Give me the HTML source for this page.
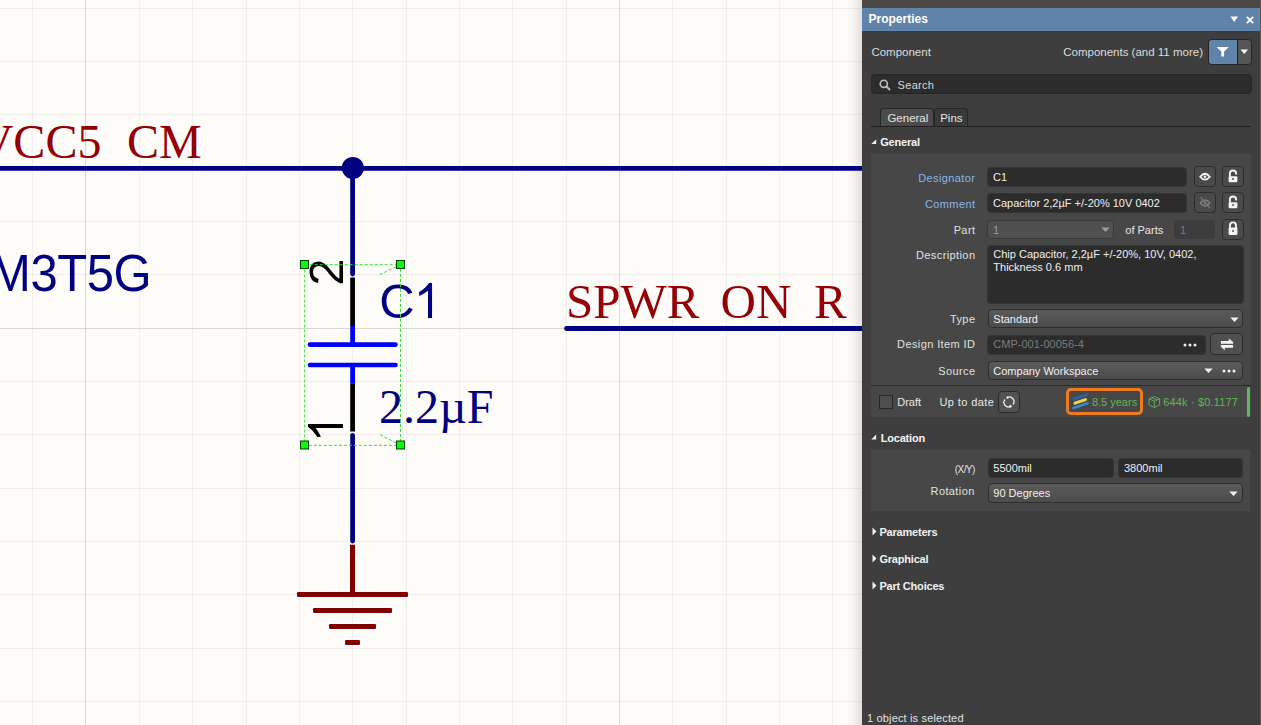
<!DOCTYPE html>
<html><head><meta charset="utf-8">
<style>
*{margin:0;padding:0;box-sizing:border-box}
html,body{width:1261px;height:725px;overflow:hidden;background:#fefcf9}
body{position:relative;font-family:"Liberation Sans",sans-serif}
#sch{position:absolute;left:0;top:0;width:862px;height:725px}
#shadow{position:absolute;left:846px;top:0;width:16px;height:725px;background:linear-gradient(to right,rgba(40,30,20,0),rgba(40,30,20,0.03) 40%,rgba(40,30,20,0.13))}
#panel{position:absolute;left:862px;top:0;width:399px;height:725px;background:#3e3e3e;color:#e6e6e6;font-size:11px;overflow:hidden}
.a{position:absolute;white-space:nowrap}
</style></head><body>
<svg id="sch" width="862" height="725" viewBox="0 0 862 725" shape-rendering="geometricPrecision">
<rect width="862" height="725" fill="#fefcf9"/>
<g shape-rendering="crispEdges"><rect x="32" y="0" width="1" height="725" fill="rgba(40,30,20,0.06)"/>
<rect x="85" y="0" width="1" height="725" fill="rgba(40,30,20,0.16)"/>
<rect x="139" y="0" width="1" height="725" fill="rgba(40,30,20,0.06)"/>
<rect x="192" y="0" width="1" height="725" fill="rgba(40,30,20,0.06)"/>
<rect x="246" y="0" width="1" height="725" fill="rgba(40,30,20,0.06)"/>
<rect x="299" y="0" width="1" height="725" fill="rgba(40,30,20,0.06)"/>
<rect x="352" y="0" width="1" height="725" fill="rgba(40,30,20,0.06)"/>
<rect x="406" y="0" width="1" height="725" fill="rgba(40,30,20,0.06)"/>
<rect x="459" y="0" width="1" height="725" fill="rgba(40,30,20,0.06)"/>
<rect x="512" y="0" width="1" height="725" fill="rgba(40,30,20,0.06)"/>
<rect x="566" y="0" width="1" height="725" fill="rgba(40,30,20,0.06)"/>
<rect x="619" y="0" width="1" height="725" fill="rgba(40,30,20,0.16)"/>
<rect x="672" y="0" width="1" height="725" fill="rgba(40,30,20,0.06)"/>
<rect x="726" y="0" width="1" height="725" fill="rgba(40,30,20,0.06)"/>
<rect x="779" y="0" width="1" height="725" fill="rgba(40,30,20,0.06)"/>
<rect x="832" y="0" width="1" height="725" fill="rgba(40,30,20,0.06)"/>
<rect x="0" y="8" width="862" height="1" fill="rgba(40,30,20,0.06)"/>
<rect x="0" y="61" width="862" height="1" fill="rgba(40,30,20,0.06)"/>
<rect x="0" y="114" width="862" height="1" fill="rgba(40,30,20,0.06)"/>
<rect x="0" y="168" width="862" height="1" fill="rgba(40,30,20,0.06)"/>
<rect x="0" y="221" width="862" height="1" fill="rgba(40,30,20,0.06)"/>
<rect x="0" y="274" width="862" height="1" fill="rgba(40,30,20,0.06)"/>
<rect x="0" y="328" width="862" height="1" fill="rgba(40,30,20,0.16)"/>
<rect x="0" y="381" width="862" height="1" fill="rgba(40,30,20,0.06)"/>
<rect x="0" y="434" width="862" height="1" fill="rgba(40,30,20,0.06)"/>
<rect x="0" y="488" width="862" height="1" fill="rgba(40,30,20,0.06)"/>
<rect x="0" y="541" width="862" height="1" fill="rgba(40,30,20,0.06)"/>
<rect x="0" y="594" width="862" height="1" fill="rgba(40,30,20,0.06)"/>
<rect x="0" y="648" width="862" height="1" fill="rgba(40,30,20,0.06)"/>
<rect x="0" y="701" width="862" height="1" fill="rgba(40,30,20,0.06)"/></g>
<text x="-21.3" y="157.5" font-family="Liberation Serif" font-size="48" fill="#940006">VCC5</text>
<text x="127" y="157.5" font-family="Liberation Serif" font-size="48" fill="#940006">CM</text>
<line x1="0" y1="168.4" x2="862" y2="168.4" stroke="#000080" stroke-width="4.8"/>
<circle cx="352.85" cy="167.9" r="11" fill="#000080"/>
<text x="-10" y="291" transform="matrix(1,0,0,1.05,0,-14.55)" font-family="Liberation Sans" font-size="49" letter-spacing="-0.4" fill="#000080">M3T5G</text>
<line x1="352.6" y1="168" x2="352.6" y2="274.1" stroke="#000080" stroke-width="4.8" stroke-linecap="round"/>
<line x1="352.6" y1="277.5" x2="352.6" y2="326" stroke="#000000" stroke-width="4.8"/>
<line x1="352.6" y1="326" x2="352.6" y2="344.6" stroke="#0000ff" stroke-width="4.8"/>
<line x1="310" y1="344.6" x2="395.5" y2="344.6" stroke="#0000ff" stroke-width="4.7" stroke-linecap="round"/>
<line x1="310" y1="365" x2="395.5" y2="365" stroke="#0000ff" stroke-width="4.7" stroke-linecap="round"/>
<line x1="352.6" y1="365" x2="352.6" y2="383.8" stroke="#0000ff" stroke-width="4.8"/>
<line x1="352.6" y1="383.8" x2="352.6" y2="431.5" stroke="#000000" stroke-width="4.8"/>
<line x1="352.6" y1="435.3" x2="352.6" y2="541" stroke="#000080" stroke-width="4.8" stroke-linecap="round"/>
<line x1="352.5" y1="544.7" x2="352.5" y2="594" stroke="#800000" stroke-width="5"/>
<rect x="297" y="592" width="111" height="5" rx="1.2" fill="#800000"/>
<rect x="313" y="608" width="79" height="5" rx="1.2" fill="#800000"/>
<rect x="329" y="624" width="47" height="5" rx="1.2" fill="#800000"/>
<rect x="345" y="640" width="15" height="5" rx="1.2" fill="#800000"/>
<text x="379.3" y="318" font-family="Liberation Sans" font-size="49" fill="#000080">C</text>
<path d="M432.05,283 L432.05,317.9 L428,317.9 L428,290.7 Q424,293.8 419.3,295.9 L419,292.3 Q425,289 429.2,283 Z" fill="#000080"/>
<text x="379" y="423.2" font-family="Liberation Serif" font-size="48" fill="#000080">2.2µF</text>
<text x="566" y="317.8" font-family="Liberation Serif" font-size="49" fill="#940006">SPWR</text>
<text x="720.5" y="317.8" font-family="Liberation Serif" font-size="49" fill="#940006">ON</text>
<text x="814" y="317.8" font-family="Liberation Serif" font-size="49" fill="#940006">R</text>
<line x1="566.5" y1="328.5" x2="862" y2="328.5" stroke="#000080" stroke-width="4.8" stroke-linecap="round"/>
<text transform="translate(343,285.8) rotate(-90)" font-family="Liberation Sans" font-size="49" fill="#000">2</text>
<path transform="translate(25,856.05) rotate(-90)" d="M432.05,283 L432.05,317.9 L428,317.9 L428,290.7 Q424,293.8 419.3,295.9 L419,292.3 Q425,289 429.2,283 Z" fill="#000"/>
<rect x="304.7" y="264.7" width="95.8" height="180.6" fill="none" stroke="#33dd33" stroke-width="1" stroke-dasharray="3,2"/>
<line x1="400.5" y1="264.7" x2="378.8" y2="275" stroke="#33dd33" stroke-width="1" stroke-dasharray="3,2"/>
<line x1="400.5" y1="445.3" x2="378.8" y2="434" stroke="#33dd33" stroke-width="1" stroke-dasharray="3,2"/>
<rect x="300.5" y="260.5" width="8" height="8" fill="#00ff00" stroke="#0a3a0a" stroke-width="1"/>
<rect x="396.5" y="260.5" width="8" height="8" fill="#00ff00" stroke="#0a3a0a" stroke-width="1"/>
<rect x="300.5" y="441" width="8" height="8" fill="#00ff00" stroke="#0a3a0a" stroke-width="1"/>
<rect x="396.5" y="441" width="8" height="8" fill="#00ff00" stroke="#0a3a0a" stroke-width="1"/>
</svg>
<div id="shadow"></div>
<div id="panel">
<div class="a" style="left:0.0px;top:0.0px;width:399.0px;height:8.0px;background:#4a4744"></div>
<div class="a" style="left:0.0px;top:8.0px;width:399.0px;height:23.0px;background:#6084a9"></div>
<div class="a" style="left:6.5px;top:10.93px;font-size:12px;line-height:16px;color:#ffffff;font-weight:bold;">Properties</div>
<svg class="a" style="left:368px;top:16px" width="9" height="7"><path d="M0.5,0.5 L8,0.5 L4.25,6 Z" fill="#fff"/></svg>
<svg class="a" style="left:384px;top:16px" width="8" height="8"><path d="M0.8,0.8 L7.2,7.2 M7.2,0.8 L0.8,7.2" stroke="#fff" stroke-width="1.9"/></svg>
<div class="a" style="left:398.0px;top:0.0px;width:1.0px;height:725.0px;background:#5a5959"></div>
<div class="a" style="left:9.4px;top:44.75px;font-size:11.5px;line-height:15.5px;color:#dcdcdc;font-weight:normal;">Component</div>
<div class="a" style="right:58.0px;top:44.55px;font-size:11.5px;line-height:15.5px;color:#dcdcdc;font-weight:normal;">Components (and 11 more)</div>
<div class="a" style="left:346.0px;top:39.0px;width:44.0px;height:25.5px;background:#555;border-radius:4px;border:1px solid #252525"></div>
<div class="a" style="left:346.0px;top:39.0px;width:30.0px;height:25.5px;background:#5f83a9;border-radius:4px 0 0 4px;border:1px solid #252525;border-right:1px solid #1a2230"></div>
<svg class="a" style="left:378px;top:49px" width="9" height="6"><path d="M0.5,0.5 L8,0.5 L4.25,5 Z" fill="#fff"/></svg>
<div class="a" style="left:9.0px;top:74.0px;width:380.6px;height:19.6px;background:#2c2c2c;border-radius:4px;border:1px solid #262626"></div>
<svg class="a" style="left:17px;top:79px" width="12" height="12"><circle cx="4.8" cy="4.8" r="3.6" stroke="#bdbdbd" stroke-width="1.6" fill="none"/><path d="M7.5,7.5 L11,11" stroke="#bdbdbd" stroke-width="2"/></svg>
<div class="a" style="left:35.6px;top:77.66px;font-size:11px;line-height:15px;color:#d8d8d8;font-weight:normal;letter-spacing:0.3px">Search</div>
<div class="a" style="left:9.0px;top:126.0px;width:380.0px;height:1.0px;background:#1f1f1f"></div>
<div class="a" style="left:18.0px;top:108.0px;width:53.5px;height:18.0px;background:#4b4b4b;border:1.5px solid #252525;border-bottom:none;border-radius:4px 4px 0 0"></div>
<div class="a" style="left:71.5px;top:108.0px;width:34.3px;height:18.0px;background:#393939;border:1.5px solid #252525;border-bottom:none;border-radius:4px 4px 0 0"></div>
<div class="a" style="left:25.4px;top:110.75px;font-size:11.5px;line-height:15.5px;color:#e4e4e4;font-weight:normal;">General</div>
<div class="a" style="left:78.2px;top:110.75px;font-size:11.5px;line-height:15.5px;color:#e4e4e4;font-weight:normal;">Pins</div>
<div class="a" style="left:18.2px;top:135.16px;font-size:11px;line-height:15px;color:#f4f4f4;font-weight:bold;letter-spacing:-0.2px">General</div>
<div class="a" style="left:9.0px;top:154.0px;width:379.5px;height:231.0px;background:#474747"></div>
<div class="a" style="right:285.6px;top:170.76px;font-size:11px;line-height:15px;color:#8cb4e6;font-weight:normal;letter-spacing:0.4px">Designator</div>
<div class="a" style="left:125.3px;top:167.2px;width:200.2px;height:19.5px;background:#2c2c2c;border-radius:4px;border:1px solid #333;"></div>
<div class="a" style="left:131.0px;top:170.36px;font-size:11px;line-height:15px;color:#f0f0f0;font-weight:normal;">C1</div>
<div class="a" style="left:332.3px;top:166.4px;width:21.5px;height:21.1px;background:#4a4a4a;border-radius:4px;border:1.5px solid #2c2c2c"></div>
<div class="a" style="left:360.3px;top:166.4px;width:21.5px;height:21.0px;background:#4a4a4a;border-radius:4px;border:1.5px solid #2c2c2c"></div>
<div class="a" style="right:285.6px;top:196.76px;font-size:11px;line-height:15px;color:#8cb4e6;font-weight:normal;letter-spacing:0.4px">Comment</div>
<div class="a" style="left:125.3px;top:193.0px;width:200.2px;height:20.0px;background:#2c2c2c;border-radius:4px;border:1px solid #333;"></div>
<div class="a" style="left:131.0px;top:196.46px;font-size:11px;line-height:15px;color:#f0f0f0;font-weight:normal;">Capacitor 2,2µF +/-20% 10V 0402</div>
<div class="a" style="left:332.3px;top:192.4px;width:21.5px;height:21.0px;background:#4a4a4a;border-radius:4px;border:1.5px solid #2c2c2c"></div>
<div class="a" style="left:360.3px;top:192.4px;width:21.5px;height:21.0px;background:#4a4a4a;border-radius:4px;border:1.5px solid #2c2c2c"></div>
<div class="a" style="right:285.6px;top:222.86px;font-size:11px;line-height:15px;color:#e0e0e0;font-weight:normal;letter-spacing:0.4px">Part</div>
<div class="a" style="left:125.3px;top:219.8px;width:126.9px;height:19.2px;background:#4f4f4f;border-radius:4px;border:1px solid #3a3a3a"></div>
<div class="a" style="left:131.0px;top:222.86px;font-size:11px;line-height:15px;color:#9a9a9a;font-weight:normal;">1</div>
<svg class="a" style="left:238.8px;top:226.5px" width="9" height="6"><path d="M0.3,0.5 L8.7,0.5 L4.5,5 Z" fill="#9a9a9a"/></svg>
<div class="a" style="left:263.3px;top:222.86px;font-size:11px;line-height:15px;color:#e8e8e8;font-weight:normal;">of Parts</div>
<div class="a" style="left:312.4px;top:219.8px;width:41.0px;height:19.2px;background:#3c3c3c;border-radius:4px"></div>
<div class="a" style="left:318.0px;top:222.86px;font-size:11px;line-height:15px;color:#7a7a7a;font-weight:normal;">1</div>
<div class="a" style="left:360.3px;top:218.6px;width:21.5px;height:21.0px;background:#4a4a4a;border-radius:4px;border:1.5px solid #2c2c2c"></div>
<div class="a" style="right:285.6px;top:247.56px;font-size:11px;line-height:15px;color:#e0e0e0;font-weight:normal;letter-spacing:0.4px">Description</div>
<div class="a" style="left:125.4px;top:244.5px;width:256.2px;height:59.0px;background:#2c2c2c;border-radius:4px;border:1px solid #333;"></div>
<div class="a" style="left:131.3px;top:246.76px;font-size:11px;line-height:15px;color:#f0f0f0;font-weight:normal;">Chip Capacitor, 2,2µF +/-20%, 10V, 0402,</div>
<div class="a" style="left:131.3px;top:259.66px;font-size:11px;line-height:15px;color:#f0f0f0;font-weight:normal;">Thickness 0.6 mm</div>
<div class="a" style="right:285.6px;top:311.86px;font-size:11px;line-height:15px;color:#e0e0e0;font-weight:normal;letter-spacing:0.4px">Type</div>
<div class="a" style="left:125.8px;top:309.0px;width:255.6px;height:19.0px;background:linear-gradient(#5a5a5a,#4c4c4c);border-radius:4px;border:1px solid #2e2e2e"></div>
<div class="a" style="left:131.3px;top:311.86px;font-size:11px;line-height:15px;color:#f0f0f0;font-weight:normal;">Standard</div>
<svg class="a" style="left:367.6px;top:316.5px" width="9" height="6"><path d="M0.3,0.5 L8.7,0.5 L4.5,5 Z" fill="#f0f0f0"/></svg>
<div class="a" style="right:285.6px;top:336.66px;font-size:11px;line-height:15px;color:#e0e0e0;font-weight:normal;letter-spacing:0.4px">Design Item ID</div>
<div class="a" style="left:125.4px;top:335.4px;width:218.3px;height:19.3px;background:#2c2c2c;border-radius:4px;border:1px solid #333;"></div>
<div class="a" style="left:131.3px;top:337.36px;font-size:11px;line-height:15px;color:#7c7c7c;font-weight:normal;">CMP-001-00056-4</div>
<svg class="a" style="left:321.0px;top:343.0px" width="14" height="4"><circle cx="2" cy="2" r="1.5" fill="#f0f0f0"/><circle cx="7" cy="2" r="1.5" fill="#f0f0f0"/><circle cx="12" cy="2" r="1.5" fill="#f0f0f0"/></svg>
<div class="a" style="left:348.3px;top:333.4px;width:33.0px;height:22.1px;background:#505050;border-radius:4px;border:1.5px solid #2a2a2a"></div>
<div class="a" style="right:285.6px;top:363.66px;font-size:11px;line-height:15px;color:#e0e0e0;font-weight:normal;letter-spacing:0.4px">Source</div>
<div class="a" style="left:125.8px;top:361.0px;width:255.6px;height:19.4px;background:linear-gradient(#5a5a5a,#4c4c4c);border-radius:4px;border:1px solid #2e2e2e"></div>
<div class="a" style="left:131.3px;top:363.66px;font-size:11px;line-height:15px;color:#f0f0f0;font-weight:normal;">Company Workspace</div>
<svg class="a" style="left:341.5px;top:368.0px" width="9" height="6"><path d="M0.3,0.5 L8.7,0.5 L4.5,5 Z" fill="#f0f0f0"/></svg>
<svg class="a" style="left:359.5px;top:369.0px" width="14" height="4"><circle cx="2" cy="2" r="1.5" fill="#f0f0f0"/><circle cx="7" cy="2" r="1.5" fill="#f0f0f0"/><circle cx="12" cy="2" r="1.5" fill="#f0f0f0"/></svg>
<div class="a" style="left:9.0px;top:385.0px;width:379.5px;height:1.0px;background:#2a2a2a"></div>
<div class="a" style="left:9.0px;top:386.0px;width:379.5px;height:31.0px;background:#474747"></div>
<div class="a" style="left:17.0px;top:395.0px;width:13.6px;height:13.5px;background:#4e4e4e;border:1.3px solid #262626"></div>
<div class="a" style="left:35.2px;top:394.56px;font-size:11px;line-height:15px;color:#e8e8e8;font-weight:normal;">Draft</div>
<div class="a" style="left:77.4px;top:394.56px;font-size:11px;line-height:15px;color:#e8e8e8;font-weight:normal;letter-spacing:0.4px">Up to date</div>
<div class="a" style="left:136.2px;top:391.0px;width:21.6px;height:21.6px;background:#525252;border-radius:4px;border:1.5px solid #2a2a2a"></div>
<div class="a" style="left:204.0px;top:388.3px;width:77.0px;height:26.4px;border:3px solid #f07a22;border-radius:5px"></div>
<div class="a" style="left:229.9px;top:394.86px;font-size:11px;line-height:15px;color:#64b658;font-weight:normal;">8.5 years</div>
<div class="a" style="left:301.3px;top:394.86px;font-size:11px;line-height:15px;color:#64b658;font-weight:normal;letter-spacing:0.15px">644k · $0.1177</div>
<div class="a" style="left:385.0px;top:387.2px;width:3.0px;height:29.5px;background:#5cb85a;border-radius:1.5px"></div>
<div class="a" style="left:18.7px;top:431.06px;font-size:11px;line-height:15px;color:#f4f4f4;font-weight:bold;letter-spacing:-0.2px">Location</div>
<div class="a" style="left:9.0px;top:449.7px;width:378.7px;height:61.1px;background:#474747"></div>
<div class="a" style="right:286.4px;top:462.50px;font-size:10px;line-height:14px;color:#e0e0e0;font-weight:normal;letter-spacing:-0.6px">(X/Y)</div>
<div class="a" style="left:125.6px;top:458.3px;width:126.0px;height:19.3px;background:#2c2c2c;border-radius:4px;border:1px solid #333;"></div>
<div class="a" style="left:131.3px;top:461.36px;font-size:11px;line-height:15px;color:#f0f0f0;font-weight:normal;">5500mil</div>
<div class="a" style="left:256.3px;top:458.3px;width:125.0px;height:19.3px;background:#2c2c2c;border-radius:4px;border:1px solid #333;"></div>
<div class="a" style="left:262.0px;top:461.36px;font-size:11px;line-height:15px;color:#f0f0f0;font-weight:normal;">3800mil</div>
<div class="a" style="right:286.3px;top:484.36px;font-size:11px;line-height:15px;color:#e0e0e0;font-weight:normal;letter-spacing:0.4px">Rotation</div>
<div class="a" style="left:125.6px;top:483.0px;width:255.7px;height:19.6px;background:linear-gradient(#5a5a5a,#4c4c4c);border-radius:4px;border:1px solid #2e2e2e"></div>
<div class="a" style="left:131.3px;top:486.36px;font-size:11px;line-height:15px;color:#f0f0f0;font-weight:normal;">90 Degrees</div>
<svg class="a" style="left:367.3px;top:490.5px" width="9" height="6"><path d="M0.3,0.5 L8.7,0.5 L4.5,5 Z" fill="#f0f0f0"/></svg>
<svg class="a" style="left:9.5px;top:526.7px" width="5" height="9"><path d="M0.5,0.5 L4.5,4.5 L0.5,8.5 Z" fill="#f0f0f0"/></svg>
<div class="a" style="left:17.4px;top:525.06px;font-size:11px;line-height:15px;color:#f0f0f0;font-weight:bold;letter-spacing:-0.2px">Parameters</div>
<svg class="a" style="left:9.5px;top:553.5px" width="5" height="9"><path d="M0.5,0.5 L4.5,4.5 L0.5,8.5 Z" fill="#f0f0f0"/></svg>
<div class="a" style="left:17.4px;top:551.86px;font-size:11px;line-height:15px;color:#f0f0f0;font-weight:bold;letter-spacing:-0.2px">Graphical</div>
<svg class="a" style="left:9.5px;top:580.5px" width="5" height="9"><path d="M0.5,0.5 L4.5,4.5 L0.5,8.5 Z" fill="#f0f0f0"/></svg>
<div class="a" style="left:17.4px;top:578.86px;font-size:11px;line-height:15px;color:#f0f0f0;font-weight:bold;letter-spacing:-0.2px">Part Choices</div>
<div class="a" style="left:5.1px;top:711.26px;font-size:11px;line-height:15px;color:#e0e0e0;font-weight:normal;letter-spacing:0.15px">1 object is selected</div>
</div>
<svg style="position:absolute;left:0;top:0" width="1261" height="725" viewBox="0 0 1261 725">
<path d="M1216.5,47 L1228.9,47 L1224.1,51.6 L1224.1,56.6 L1221.3,56.6 L1221.3,51.6 Z" fill="#fff"/>
<path d="M876.20,139.20 L876.20,144.10 L871.30,144.10 Z" fill="#f0f0f0"/>
<path d="M1200.2,176.7 Q1205,170.8 1209.8,176.7 Q1205,182.6 1200.2,176.7 Z" fill="none" stroke="#f4f4f4" stroke-width="1.8"/><circle cx="1205" cy="176.7" r="1.3" fill="#f4f4f4"/>
<path d="M1229.90,176.70 L1229.90,173.60 A3.1,3.1 0 0 1 1236.10,173.60 L1236.10,174.60" stroke="#f4f4f4" stroke-width="1.9" fill="none"/>
<rect x="1228.60" y="176.20" width="8.8" height="6" rx="1.2" fill="#f4f4f4"/><circle cx="1233.00" cy="179.00" r="1" fill="#555"/>
<path d="M1200.2,202.9 Q1205,197 1209.8,202.9 Q1205,208.8 1200.2,202.9 Z" fill="none" stroke="#7c7c7c" stroke-width="1.6"/><circle cx="1205" cy="202.9" r="1.2" fill="#7c7c7c"/><path d="M1200.5,197.2 L1210,208" stroke="#7c7c7c" stroke-width="1.2"/>
<path d="M1229.90,202.70 L1229.90,199.60 A3.1,3.1 0 0 1 1236.10,199.60 L1236.10,200.60" stroke="#f4f4f4" stroke-width="1.9" fill="none"/>
<rect x="1228.60" y="202.20" width="8.8" height="6" rx="1.2" fill="#f4f4f4"/><circle cx="1233.00" cy="205.00" r="1" fill="#555"/>
<path d="M1230.00,227.90 L1230.00,225.40 A3,3 0 0 1 1236.00,225.40 L1236.00,227.90" stroke="#f4f4f4" stroke-width="1.9" fill="none"/>
<rect x="1228.60" y="227.40" width="8.8" height="7.6" rx="1.2" fill="#f4f4f4"/><circle cx="1233.00" cy="231.00" r="1" fill="#555"/>
<path d="M1220.9,341 L1228.8,341 L1228.8,338.4 L1233.1,342 L1233.1,343.7 L1220.9,343.7 Z" fill="#f4f4f4"/><path d="M1233.1,345 L1220.9,345 L1220.9,346.8 L1224.8,350.3 L1224.8,347.8 L1233.1,347.8 Z" fill="#f4f4f4"/>
<path d="M1007.2,397.6 A4.6,4.6 0 0 1 1012.9,404.6" stroke="#f0f0f0" stroke-width="1.3" fill="none"/><path d="M1010.6,406.5 A4.6,4.6 0 0 1 1005,399.5" stroke="#f0f0f0" stroke-width="1.3" fill="none"/><circle cx="1007.4" cy="397.6" r="1.2" fill="#f0f0f0"/><circle cx="1010.4" cy="406.3" r="1.2" fill="#f0f0f0"/>
<path d="M1074,399 L1087,394.5" stroke="#2b62ad" stroke-width="2.6" stroke-linecap="round"/><path d="M1075,403.2 L1085.5,399.6" stroke="#e8d84c" stroke-width="3" stroke-linecap="round"/><path d="M1073.5,408 L1087.5,403.2" stroke="#3a84d0" stroke-width="2.6" stroke-linecap="round"/>
<path d="M1154.3,396.5 L1159.6,398.8 L1159.6,405 L1154.3,407.5 L1149,405 L1149,398.8 Z M1149,398.8 L1154.3,401.3 L1159.6,398.8 M1154.3,401.3 L1154.3,407.5 M1151.6,397.6 L1157,400" stroke="#62b556" stroke-width="0.9" fill="none"/>
<path d="M876.20,434.60 L876.20,439.50 L871.30,439.50 Z" fill="#f0f0f0"/>
</svg>
</body></html>
